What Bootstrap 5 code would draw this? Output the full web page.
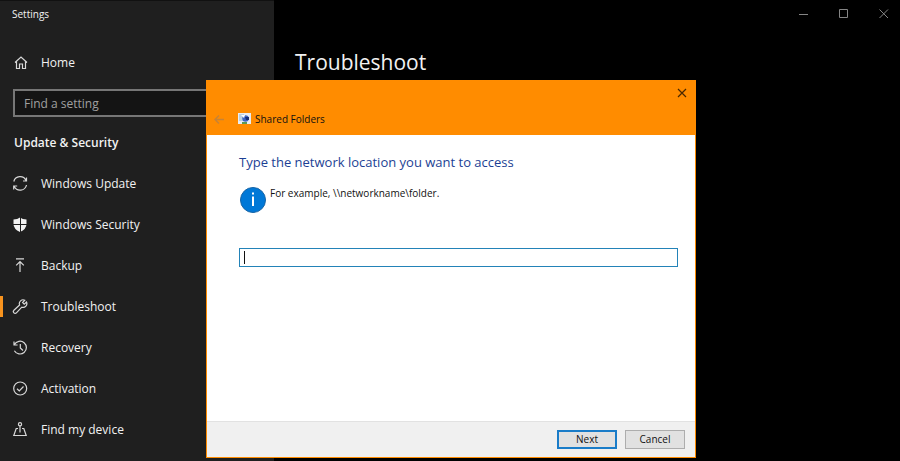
<!DOCTYPE html>
<html lang="en">
<head>
<meta charset="utf-8">
<meta name="viewport" content="width=device-width, initial-scale=1">
<title>Settings</title>
<link href="https://cdn.jsdelivr.net/npm/bootstrap@5.3.0/dist/css/bootstrap.min.css" rel="stylesheet">
<style>
body{font-family:"Open Sans","Noto Sans",sans-serif;font-size:12px;line-height:20px;background:#000;color:#f2f2f2}
svg{display:block;flex:none}
.line-icon{fill:none;stroke:currentColor}
.side{width:274px;background:#1f1f1f;border-top:1px solid #111}
.app-title{font-size:10px;padding:3px 12px 5px}
.side-link{height:41px;padding-left:12px;gap:12px;color:#f2f2f2;text-decoration:none}
.side-link .line-icon{color:#d8d8d8}
.side-link.current{background:linear-gradient(#f7931e,#f7931e) 0 50%/3px 21px no-repeat}
.side-link.home{height:42px;margin-top:13px}
.search-box{height:28px;margin:5px 12px 0 13px;padding:0 9px;background:#141414;border:2px solid #767676;border-radius:0;color:#fff;font-size:12px}
.search-box::placeholder{color:#a0a0a0;opacity:1}
.side h2{font-size:12px;line-height:20px;font-weight:600;margin:16px 0 10px;padding-left:14px}
.page-title{font-size:21px;line-height:32px;font-weight:400;padding-left:21px;margin:18px 0 0}
.icon-btn{border:0;background:none;padding:0;display:flex;align-items:center;justify-content:center}
.win-controls{height:28px;gap:28px;padding-right:10px}
.win-controls .icon-btn{width:12px;color:#858585}
.wizard{left:206px;top:80px;width:490px;background:#fff;border:1px solid #ff8c00;color:#111;font-size:10px;line-height:16px}
.wizard-head{background:#ff8c00;padding-bottom:2px}
.wizard-close{width:27px;height:24px;color:#4a2800}
.wizard-name{height:28px;padding-left:7px;gap:13px}
.wizard-back{color:#c78336}
.wizard-main{min-height:286px;padding:17px 17px 17px 32px}
.wizard-main h2{font-size:13px;line-height:20px;font-weight:400;color:#1c3f94;margin:0 0 13px}
.path-box{height:19px;margin-top:35px;padding:0 5px;border:1px solid #2383b8;border-radius:0;font-size:10px;background:#fff linear-gradient(#111,#111) 4px 2px/1px 13px no-repeat}
.wizard-foot{background:#f0f0f0;border-top:1px solid #e2e2e2;padding:8px 10px 8px;gap:8px}
.wiz-btn{width:60px;height:19px;padding:0;font-size:10px;line-height:15px;border:1px solid #adadad;border-radius:0;background:#e1e1e1;color:#111}
.wiz-btn.default{border:2px solid #1a7cc8}
</style>
</head>
<body>
<div class="d-flex min-vh-100 position-relative">
  <aside class="side d-flex flex-column flex-shrink-0">
    <div class="app-title">Settings</div>
    <a class="side-link home d-flex align-items-center" href="#">
      <svg class="line-icon" width="17" height="16" viewBox="0 0 17 16" stroke-width="1.2"><path d="M3 7.500 9 2 15 7.500M4.500 6.500V13.500H7.500V9H10.500V13.500H13.500V6.500"/></svg>
      Home
    </a>
    <input class="search-box flex-shrink-0" type="search" placeholder="Find a setting" aria-label="Find a setting">
    <h2>Update &amp; Security</h2>
    <nav>
      <a class="side-link d-flex align-items-center" href="#">
        <svg class="line-icon" width="17" height="16" viewBox="0 0 17 16" stroke-width="1.2"><path d="M1.800 5.500A6.500 6.500 0 0 1 14 4.500M14.500 1.500V5H11M14.500 9A6.500 6.500 0 0 1 2.300 10.500M1.700 13.500V10H5.200"/></svg>
        Windows Update
      </a>
      <a class="side-link d-flex align-items-center" href="#">
        <svg width="17" height="16" viewBox="0 0 17 16"><path fill="currentColor" d="M8 .5Q10.500 2.500 14.500 2.500V7Q14.500 12 8 15Q1.500 12 1.500 7V2.500Q5.500 2.500 8 .5Z"/><path stroke="#1f1f1f" d="M8.500 0V16M1 7.500H15"/></svg>
        Windows Security
      </a>
      <a class="side-link d-flex align-items-center" href="#">
        <svg class="line-icon" width="17" height="16" viewBox="0 0 17 16" stroke-width="1.2"><path d="M4 .8H12M8 14V3.500M4.200 7.300 8 3.500 11.800 7.300"/></svg>
        Backup
      </a>
      <a class="side-link current d-flex align-items-center" href="#" aria-current="page">
        <svg class="line-icon" width="17" height="16" viewBox="0 0 17 16" stroke-width="1.2"><path d="M12.800 1.200A3.800 3.800 0 0 0 7.600 6L1.900 11.300A1.700 1.700 0 0 0 4.400 13.800L9.800 8.200A3.800 3.800 0 0 0 14.500 3L12.200 5.200 10.600 3.600Z"/></svg>
        Troubleshoot
      </a>
      <a class="side-link d-flex align-items-center" href="#">
        <svg class="line-icon" width="17" height="16" viewBox="0 0 17 16" stroke-width="1.2"><path d="M2.400 4.500A6.400 6.400 0 1 1 2.400 10.700M2 1.500V5H5.600M8.300 4V8L11 10.500"/></svg>
        Recovery
      </a>
      <a class="side-link d-flex align-items-center" href="#">
        <svg class="line-icon" width="17" height="16" viewBox="0 0 17 16" stroke-width="1.2"><circle cx="8.200" cy="7.500" r="6.500"/><path d="M5 7.700 7.300 9.900 11.500 5.500"/></svg>
        Activation
      </a>
      <a class="side-link d-flex align-items-center" href="#">
        <svg class="line-icon" width="17" height="16" viewBox="0 0 17 16" stroke-width="1.2"><circle cx="8" cy="2.300" r="1.600"/><path d="M8 3.900V10.500M6 6.500H4.200L1.800 13.500H14.200L11.800 6.500H10"/></svg>
        Find my device
      </a>
    </nav>
  </aside>

  <main class="flex-grow-1">
    <div class="win-controls d-flex justify-content-end">
      <button class="icon-btn" type="button" aria-label="Minimize"><svg class="line-icon" width="10" height="10" viewBox="0 0 10 10"><path d="M0 5.500H9"/></svg></button>
      <button class="icon-btn" type="button" aria-label="Maximize"><svg class="line-icon" width="10" height="10" viewBox="0 0 10 10"><path d="M.5.500H8.500V8.500H.5Z"/></svg></button>
      <button class="icon-btn" type="button" aria-label="Close"><svg class="line-icon" width="10" height="10" viewBox="0 0 10 10"><path d="M.5.500 9 9M9 .5.500 9"/></svg></button>
    </div>
    <h1 class="page-title">Troubleshoot</h1>
  </main>

  <section class="wizard position-absolute" role="dialog" aria-labelledby="wizard-name">
    <header class="wizard-head">
      <div class="d-flex justify-content-end">
        <button class="icon-btn wizard-close" type="button" aria-label="Close wizard"><svg class="line-icon" width="10" height="10" viewBox="0 0 10 10" stroke-width="1.2"><path d="M1 1 9 9M9 1 1 9"/></svg></button>
      </div>
      <div class="wizard-name d-flex align-items-center">
        <button class="icon-btn wizard-back" type="button" aria-label="Back" disabled><svg class="line-icon" width="11" height="9" viewBox="0 0 11 9" stroke-width="1.4"><path d="M10 4.500H1M5 .5 1 4.500 5 8.500"/></svg></button>
        <div class="d-flex align-items-center gap-1">
          <svg width="13" height="12" viewBox="0 0 13 12"><path fill="#e9edf2" d="M0 0H13V11H0Z"/><path fill="#b9cfe2" d="M1 1H6V8H1Z"/><circle cx="7.500" cy="5.500" r="3.200" fill="#3d66c4"/><path fill="#fff" d="M3 2 7 2 6 5Z"/><path fill="#1b2f78" d="M7 4H11V7H8Z"/><path fill="#5c9b55" d="M4 9H9V11H4Z"/></svg>
          <span id="wizard-name">Shared Folders</span>
        </div>
      </div>
    </header>
    <form>
      <div class="wizard-main">
        <h2>Type the network location you want to access</h2>
        <div class="d-flex gap-1">
          <svg width="27" height="28" viewBox="0 0 27 28"><circle cx="14" cy="15" r="12.500" fill="#0078d7" stroke="#1764a5"/><path fill="#fff" d="M13 11.500H15V21H13ZM13 7.500H15V9.500H13Z"/></svg>
          <label for="network-path">For example, \\networkname\folder.</label>
        </div>
        <input class="path-box w-100 d-block" id="network-path" type="text">
      </div>
      <footer class="wizard-foot d-flex justify-content-end">
        <button class="wiz-btn default" type="button">Next</button>
        <button class="wiz-btn" type="button">Cancel</button>
      </footer>
    </form>
  </section>
</div>
<script src="https://cdn.jsdelivr.net/npm/bootstrap@5.3.0/dist/js/bootstrap.bundle.min.js"></script>
</body>
</html>
